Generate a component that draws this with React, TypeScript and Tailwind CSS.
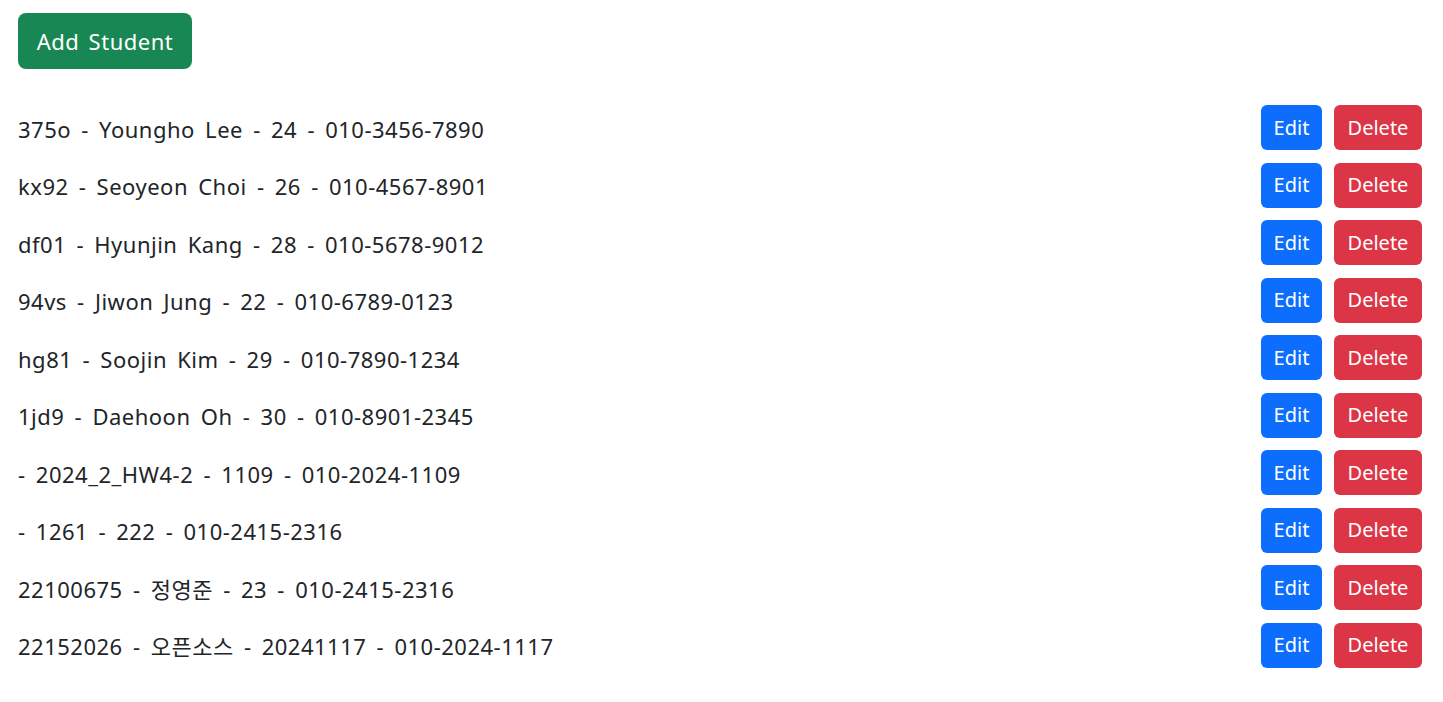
const students = [
  { id: '375o', name: 'Youngho Lee', age: '24', phone: '010-3456-7890' },
  { id: 'kx92', name: 'Seoyeon Choi', age: '26', phone: '010-4567-8901' },
  { id: 'df01', name: 'Hyunjin Kang', age: '28', phone: '010-5678-9012' },
  { id: '94vs', name: 'Jiwon Jung', age: '22', phone: '010-6789-0123' },
  { id: 'hg81', name: 'Soojin Kim', age: '29', phone: '010-7890-1234' },
  { id: '1jd9', name: 'Daehoon Oh', age: '30', phone: '010-8901-2345' },
  { id: '', name: '2024_2_HW4-2', age: '1109', phone: '010-2024-1109' },
  { id: '', name: '1261', age: '222', phone: '010-2415-2316' },
  { id: '22100675', name: '정영준', age: '23', phone: '010-2415-2316' },
  { id: '22152026', name: '오픈소스', age: '20241117', phone: '010-2024-1117' },
]

export default function App() {
  return (
    <div
      className="min-h-screen bg-white pl-[18px] pr-[21px] pt-[13px] text-[#212529]"
      style={{ fontFamily: '"Noto Sans", "Noto Sans CJK KR", sans-serif' }}
    >
      <button className="h-[56px] w-[174px] rounded-lg bg-[#198754] text-[22px] tracking-[0.5px] [word-spacing:3px] text-white">
        Add Student
      </button>

      <ul className="mt-[30px]">
        {students.map((s, i) => (
          <li key={i} className="flex h-[57.5px] items-center justify-between">
            <span className="pt-[3px] text-[22px] tracking-[0.5px] [word-spacing:4px]">
              {s.id ? `${s.id} - ` : '- '}
              {s.name} - {s.age} - {s.phone}
            </span>
            <div className="flex gap-3">
              <button className="h-[45px] w-[61px] rounded-md bg-[#0d6efd] text-[20px] text-white">Edit</button>
              <button className="h-[45px] w-[88px] rounded-md bg-[#dc3545] text-[20px] text-white">Delete</button>
            </div>
          </li>
        ))}
      </ul>
    </div>
  )
}
